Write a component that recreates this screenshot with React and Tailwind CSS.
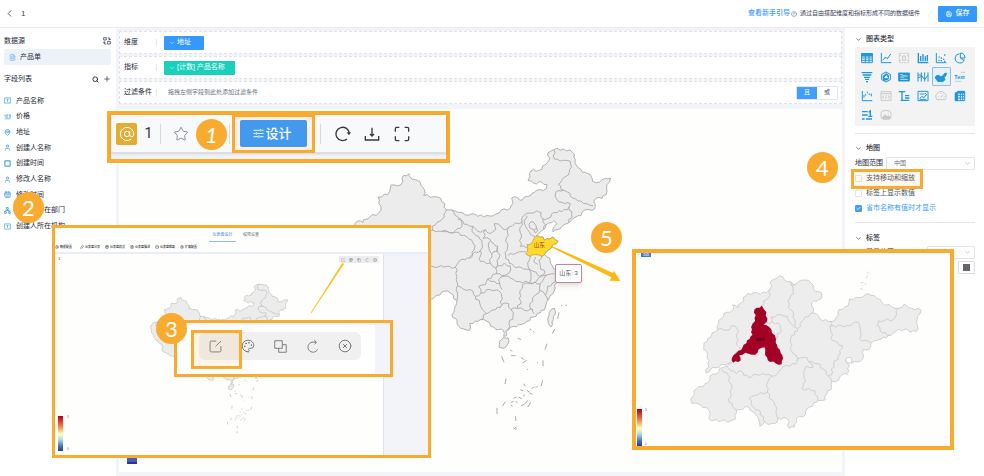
import React from 'react'
import {
  AtSign,
  CalendarDays,
  Check,
  ChevronDown,
  ChevronLeft,
  CircleHelp,
  CircleX,
  Copy,
  FileText,
  Link,
  MapPin,
  Network,
  Palette,
  Plus,
  Save,
  Search,
  Settings,
  Square,
  Star,
  User,
} from 'lucide-react'

// 给地图边界加一点折线细节
const rough = (text, closed, amount = 4) => {
  const pts = text.trim().split(/\s+/).map(p => p.split(',').map(Number))
  const out = []
  pts.forEach(([x, y], i) => {
    out.push(`${x},${y}`)
    const next = pts[i + 1] || (closed ? pts[0] : null)
    if (!next) return
    const [nx, ny] = next
    const len = Math.hypot(nx - x, ny - y) || 1
    const steps = Math.max(1, Math.round(len / 9))
    for (let s = 1; s < steps; s++) {
      const t = s / steps
      const k = Math.sin(x * 1.7 + y * 2.3 + s * 4.1) * Math.min(amount, len / 5)
      const px = x + (nx - x) * t - ((ny - y) / len) * k
      const py = y + (ny - y) * t + ((nx - x) / len) * k
      out.push(`${px.toFixed(1)},${py.toFixed(1)}`)
    }
  })
  return out.join(' ')
}

const chinaOutline = `
-235,293 -220,275 -202,278 -200,270 -155,250 -148,230 -157,202 -128,195 -118,166 -88,165 -85,145 -65,132
-55,148 -30,158 -18,180 -20,198 10,201 32,207 48,240 65,241 95,248 115,257 135,254 160,262 190,258 212,242
240,235 248,222 244,205 262,204 275,212 290,200 312,188 328,180 348,177 350,165 335,158 310,160 293,152
299,140 302,124 325,122 345,105 358,85 352,70 370,60 400,58 426,68 435,90 440,110 456,128 480,135 487,155
508,157 525,146 540,145 530,165 530,185 515,206 498,205 490,215 495,230 485,242 465,240 452,258 430,265
415,280 395,290 380,300 368,307 371,291 380,282 370,273 355,280 345,295 330,306 318,318 338,322 342,332
358,328 368,322 383,335 378,342 365,348 355,360 342,374 358,385 366,408 375,430 378,450 375,475 368,492
355,510 345,532 330,550 310,562 290,575 272,584 250,590 236,600 226,604 229,618 220,620 219,602 205,600
190,592 170,575 150,570 135,575 118,582 118,602 100,598 85,590 80,573 65,555 74,532 80,512 60,490 40,485
20,497 0,508 -25,500 -60,498 -100,472 -141,453 -170,434 -170,406 -217,359 -230,321`

const chinaBorders = [
  '48,240 42,262 20,278 5,290 8,302 -30,312 -90,318 -150,300 -210,290',
  '8,302 35,305 75,308 108,320 128,340 132,360 120,385 95,388 75,412 40,412 5,410 -40,400 -100,390 -130,350',
  '65,241 82,262 95,280 90,296 60,310 35,305',
  '82,268 110,284 128,290 125,306 145,320 155,342 150,362 128,372 118,385',
  '128,290 150,308 165,300 178,312 196,300 192,282 212,290 226,300 236,292 255,280 275,278 280,258 300,250 318,244 332,248 338,268 352,266 372,248 395,246 416,232 420,222',
  '165,300 158,326 180,330 190,342 202,350 200,365 184,372 175,352 178,335',
  '236,292 228,325 232,350 226,378 236,400 250,408',
  '275,278 268,300 272,325 270,350 290,355',
  '232,378 258,370 286,366',
  '290,258 282,280 292,300 308,318 316,324',
  '296,284 308,276 316,286 320,296 310,300 298,294 296,284',
  '310,300 315,310 322,304 320,296',
  '338,268 345,285 340,298',
  '416,232 424,255 415,278',
  '370,60 372,88 400,92 420,95 424,112 414,136 394,152 384,164 400,182 376,188 380,210 402,222 420,222',
  '400,182 418,190 428,205 452,214 470,222 488,228',
  '75,412 80,440 82,470 98,478 120,480 135,500 152,490 145,470 165,465 172,448 198,432 196,415 180,400 150,395 150,362',
  '184,372 180,400',
  '202,350 206,385 196,415 222,400 240,410 236,430 215,438 198,432',
  '80,470 82,500 80,512',
  '135,500 148,520 156,540 168,552 150,570',
  '152,490 180,480 208,486 214,500 214,525 196,540 168,552',
  '172,448 192,455 208,462 205,450 222,440 240,445 268,456 296,460 302,440 298,420 280,418 250,408',
  '208,462 215,480',
  '214,525 235,522 242,540 262,536 282,542 306,538 312,552',
  '242,540 248,560 236,580 232,600',
  '262,536 272,515 268,490 276,466 296,460 330,462 328,482 312,500 300,520 302,538',
  '328,482 345,496 352,512',
  '296,460 318,456 332,440 350,436 372,432',
  '330,462 340,448 350,436',
  '300,380 292,400 298,420 318,428 328,440 344,430 330,410 326,392 335,378',
  '375,456 352,470 345,496',
  '316,382 310,396 322,404',
]

const shandong = '322,318 338,322 342,332 358,328 368,322 383,335 378,342 365,348 355,360 345,368 335,380 315,375 300,380 286,372 292,355 290,345 305,340 310,328'

const seaDashes = 'M386,548l-4,20M373,598l-7,14M350,642l-6,18M338,692v18M337,752l-5,18M301,818l-8,14M214,680l7,18M227,747l-3,16M200,835v18M225,816l-9,14M240,662l6,3M242,678h14M272,684l10,6M277,700l12,-8M262,625l10,5M298,598l6,3M308,605l4,3M320,698l3,2M290,718l3,2M280,762l5,8M270,780l8,3M290,782l8,6M298,790l8,4M304,776l8,-4M316,774l6,-4M278,800l6,-5M264,802l10,5M249,806l10,-4M241,826l6,4M256,815l6,4M272,828l10,-4M284,822l8,-10M242,818l8,-3M255,860l2,14M248,894l10,6M254,892l6,4M405,527h4M392,528h3'

const ChinaMap = ({ className, highlight }) => (
  <svg viewBox="-250 40 810 900" className={className} aria-hidden="true">
    <g fill="#ececec" stroke="#acacac" strokeWidth="2.8" strokeLinejoin="round">
      <polygon points={rough(chinaOutline, true)} />
      <polygon points={rough('207,635 218,624 234,625 236,634 229,648 218,656 206,652', true, 2)} />
      <polygon points={rough('362,540 372,535 375,545 369,570 362,592 354,582 352,566', true, 2)} />
      {chinaBorders.map(line => (
        <polyline key={line} points={rough(line, false)} fill="none" />
      ))}
    </g>
    <path d={seaDashes} stroke="#a5a5a5" strokeWidth="2.8" fill="none" />
    {highlight && (
      <g>
        <polygon points={rough(shandong, true, 3)} fill="#ffd92b" stroke="#b9a24c" strokeWidth="2.4" />
        <text x="327" y="353" textAnchor="middle" fontSize="17" fill="#a53428">山东</text>
      </g>
    )}
  </svg>
)

const provinceOutline = `
448,90 462,103 480,108 490,117 508,106 535,104 548,118 556,138 574,142 572,160 550,166 544,180 548,202 565,212
578,226 612,226 624,208 626,192 654,180 658,160 686,156 712,144 740,158 756,172 785,184 805,188 822,176 845,188
873,194 862,212 862,240 858,258 840,260 826,250 796,258 782,270 760,275 742,284 722,294 716,312 700,312 700,330
692,346 664,354 662,336 650,338 648,352 658,362 650,384 630,392 625,404 604,408 604,425 590,445 584,464 562,466
560,470 530,490 525,508 498,520 492,545 477,549 470,520 442,518 436,534 414,538 404,530 388,543 382,515 370,500
355,485 318,494 316,520 300,527 240,525 234,492 210,478 184,474 180,462 198,430 232,412 238,392 265,378 275,366
290,362 304,352 300,350 240,372 226,382 236,345 220,302 232,278 262,252 264,225 290,200 308,192 306,178 322,186
352,143 408,142 420,128 424,104`

const provinceBorders = [
  '420,128 414,158 400,166 396,180',
  '480,108 488,125 490,145 472,165 474,186 490,205 494,242',
  '262,252 298,252 304,240 320,250 320,300 334,312',
  '400,237 425,228 422,214 452,208 470,212 480,232 500,248 502,256 484,270 480,290 484,318 502,340',
  '425,228 450,240 454,255 440,265 436,282',
  '502,248 520,222 540,204 548,202',
  '600,226 602,260 606,285 636,300 630,325 610,355 604,388 594,392',
  '502,340 496,356 460,362 452,372 442,384 425,392 405,388 370,386 362,396 340,390 332,376 318,384 300,376 288,362',
  '502,340 530,336 536,350 560,354 580,372 594,392 604,408',
  '528,362 520,380 526,408 514,430 554,436 562,466',
  '536,350 548,366 528,362',
  '600,242 650,240 684,230 690,258 688,280 722,292',
  '805,188 790,222 744,226 740,240 758,262 780,268',
  '275,372 292,388 304,430 296,470 318,494',
  '425,392 412,410 410,440 372,450 356,458 370,485 390,500 402,530',
  '410,440 434,480 442,518',
]

const jinan = '394,180 400,190 408,200 410,228 400,237 418,246 424,262 434,270 436,292 448,312 456,330 454,356 436,354 412,344 404,320 402,305 384,312 374,328 345,322 326,330 330,346 308,352 304,338 318,322 336,306 350,284 366,268 362,244 374,226 372,192'

const ProvinceMap = ({ className }) => (
  <svg viewBox="170 70 720 490" className={className} aria-hidden="true">
    <g fill="#ededed" stroke="#c2c2c2" strokeWidth="2.2" strokeLinejoin="round">
      <polygon points={rough(provinceOutline, true)} />
      {provinceBorders.map(line => (
        <polyline key={line} points={rough(line, false)} fill="none" />
      ))}
      <circle cx="656" cy="344" r="9" fill="#fff" />
      <path d="M710,84l6,-6M708,98l4,-8M692,112l8,-2M690,128l8,4M704,116l4,-2M650,386l4,2M480,118h16" />
    </g>
    <polygon points={rough(jinan, true, 3)} fill="#a50026" />
    <text x="389" y="287" textAnchor="middle" fontSize="9" fill="#1c0508">济南市</text>
  </svg>
)

// 图表类型图标
const chartIcons = [
  { name: '表格', art: <><path d="M2 5h32v27H2z" /><path d="M2 12h32M2 18h32M2 25h32M13 5v27M24 5v27" /><path d="M2 5h32v6H2z" fill="currentColor" /></> },
  { name: '折线图', art: <path d="M4 3v29h30M8 25l7-8 8 2 9-13M14 16h2M22 20h2M31 7h2" /> },
  { name: '指标卡', off: true, art: <><path d="M4 4h28v28H4z" strokeDasharray="4 2" /><path d="M14 12h8v13h-8zM4 11h5M27 11h5M4 25h5M27 25h5" /></> },
  { name: '柱状图', art: <path d="M4 3v29h30M11 28V12M18 28V6M25 28V13M31 28V9" strokeWidth="4" /> },
  { name: '散点图', art: <><path d="M4 3v29h30" /><path d="M10 25h4M17 18h4M17 26h4M24 22h4M27 9h4M27 28h4M11 15h3" strokeWidth="4" /></> },
  { name: '饼图', art: <><path d="M16 5a14 14 0 1 0 15 18" /><path d="M19 3v15h14C33 9 27 3 19 3zM19 18l11 7" /></> },
  { name: '漏斗图', art: <path d="M2 5h32M5 12h26M9 19h18M12 25h12M15 32h6" strokeWidth="4" /> },
  { name: '雷达图', art: <><path d="M18 3l13 7v16l-13 7-13-7V10z" /><path d="M18 8l8 5-2 13-13 2-2-12z" fill="currentColor" /><path d="M12 21l8-9 4 10z" fill="#fff" stroke="none" /></> },
  { name: '桑基图', art: <><path d="M2 6h32v24H2z" fill="currentColor" /><path d="M7 11c10 0 10 6 22 4M7 25h22M7 18h12" stroke="#f3f3f3" strokeWidth="2.5" /></> },
  { name: '平行坐标', art: <path d="M3 4v28M13 4v28M23 4v28M33 4v28M3 12h10M3 20l10-3M13 12l10 14 10-14" /> },
  { name: '地图', active: true, art: <path d="M3 15l8-2 6 4 8-3 2-5 7-3-1 8-6 5 3 7-7 6-8-1-6 1-4-6-5-5z" fill="currentColor" /> },
  { name: '词云', art: <><path d="M20 4h13M3 31h19" strokeWidth="2" opacity=".5" /><text x="1" y="24" fontSize="16" fontWeight="700" fill="currentColor" stroke="none">Text</text></> },
  { name: '趋势图', art: <path d="M4 3v29h30M9 23v-8M14 17v-5M19 10V5M25 10v5M31 11v8" /> },
  { name: '代码', off: true, art: <><path d="M3 5h30v26H3zM3 11h30" /><path d="M12 17l-5 4 5 4M24 17l5 4-5 4M19 16l-2 10" /></> },
  { name: '文本', art: <path d="M2 5h20M12 5v26M8 31h26M21 17h13M21 24h13" strokeWidth="4" /> },
  { name: '图片', art: <><path d="M3 4h30v28H3z" /><path d="M8 26l7-7 6 4 7-9M8 12h15M8 28h20M24 9l5 5-5 4" /></> },
  { name: '仪表盘', off: true, art: <path d="M6 29a15 15 0 1 1 24 0zM17 23l7-9M8 20h3M18 9v3M26 20h3" /> },
  { name: '透视表', art: <><path d="M4 8h28v24H4zM4 16h28M4 24h28M11 4v28M19 4v28M26 4v28" /><path d="M4 10h6v22H4zM11 4h21v5H11z" fill="currentColor" /></> },
  { name: '排行', art: <path d="M3 8h17M3 18h17M3 30h8M15 30h18M23 10l5-4v16M22 22h12" strokeWidth="4" /> },
  { name: '图库', off: true, art: <><rect x="3" y="5" width="30" height="26" rx="9" /><path d="M7 26l8-9 6 7 4-4 5 5v3H8z" fill="currentColor" /><path d="M25 12v2" strokeWidth="4" /></> },
]

const ChartIcon = ({ art, off }) => (
  <svg
    viewBox="0 0 36 36"
    className={`w-3 h-3 ${off ? 'text-[#c8c8c8]' : 'text-[#1f96dc]'}`}
    fill="none"
    stroke="currentColor"
    strokeWidth="3"
    aria-hidden="true"
  >
    {art}
  </svg>
)

const TextIcon = () => (
  <svg viewBox="0 0 24 24" className="w-[7px] h-[7px]" fill="none" stroke="currentColor" strokeWidth="2.5" aria-hidden="true">
    <path d="M2 3h20v18H2zM8 8h8M12 8v9" />
  </svg>
)

const NumberIcon = () => (
  <svg viewBox="0 0 24 24" className="w-[7px] h-[7px]" fill="none" stroke="currentColor" strokeWidth="2.5" aria-hidden="true">
    <path d="M2 7l2-1v9M8 6h5v4H8v5h5M17 6h5v9h-5M18 10h4M2 20h20" />
  </svg>
)

const fields = [
  { label: '产品名称', icon: <TextIcon /> },
  { label: '价格', icon: <NumberIcon /> },
  { label: '地址', icon: <MapPin size={7} strokeWidth={3} /> },
  { label: '创建人名称', icon: <User size={7} strokeWidth={3} /> },
  { label: '创建时间', icon: <Square size={7} strokeWidth={4} /> },
  { label: '修改人名称', icon: <User size={7} strokeWidth={3} /> },
  { label: '修改时间', icon: <CalendarDays size={7} strokeWidth={3} /> },
  { label: '创建人所在部门', icon: <Network size={7} strokeWidth={3} /> },
  { label: '创建人所在机构', icon: <TextIcon /> },
]

const Header = () => (
  <header className="flex items-center h-7 pl-1 pr-[7px] bg-white border-b border-[#e9ebf0]">
    <button type="button" aria-label="返回" className="text-gray-600">
      <ChevronLeft size={11} strokeWidth={2} />
    </button>
    <span className="ml-1.5 text-[8px] text-gray-700">1</span>
    <div className="flex items-center gap-px ml-auto">
      <a href="#guide" className="text-[7px] font-medium text-[#3b99ff]">查看新手引导</a>
      <CircleHelp size={6} className="text-gray-500" />
      <span className="w-[128px] pl-0.5 text-[6px] text-gray-700">通过自由搭配维度和指标形成不同的数据组件</span>
    </div>
    <button type="button" className="flex items-center justify-center gap-1 w-[39px] h-4 ml-3 rounded-[1px] bg-[#3399ff] text-[7px] font-medium text-white">
      <Save size={6} strokeWidth={3} />
      保存
    </button>
  </header>
)

const Sidebar = () => (
  <aside className="w-[116px] shrink-0 px-1 pt-[7px] bg-white text-[7px] text-gray-800">
    <div className="flex items-center justify-between h-3 pr-px">
      <h2>数据源</h2>
      <button type="button" aria-label="切换数据源">
        <svg viewBox="0 0 24 24" className="w-2 h-2" fill="none" stroke="currentColor" strokeWidth="2" aria-hidden="true">
          <path d="M2 2h8v7H2zM14 13h8v8h-8zM14 3h6v6M17 6l3 3 3-3M10 21H4v-7M1 17l3-3 3 3" />
        </svg>
      </button>
    </div>
    <button type="button" className="flex items-center gap-1 w-[107px] h-4 mt-0.5 pl-[5px] rounded-xs bg-[#edf2fa]">
      <FileText size={7} className="text-[#5aa7f5]" />
      产品单
    </button>
    <div className="flex items-center h-3 mt-2 pr-px">
      <h2>字段列表</h2>
      <button type="button" aria-label="搜索" className="ml-auto"><Search size={7} strokeWidth={3} /></button>
      <button type="button" aria-label="添加" className="ml-1"><Plus size={8} strokeWidth={2} /></button>
    </div>
    <ul className="grid grid-rows-9 h-[141px] mt-2">
      {fields.map(f => (
        <li key={f.label} className="flex items-center gap-1 whitespace-nowrap">
          <span className="w-2 text-[#4aa8e0]">{f.icon}</span>
          {f.label}
        </li>
      ))}
    </ul>
  </aside>
)

const ShelfRow = ({ label, children }) => (
  <div className="flex items-center h-[23px] pl-1 pr-[3px] border border-dashed border-[#dfe2e8] bg-white">
    <span className="w-8 text-[7px] text-gray-800 whitespace-nowrap">{label}</span>
    <span className="w-px h-[7px] mr-[7px] bg-[#e3e5ea]" />
    {children}
  </div>
)

const Workspace = () => (
  <main className="flex flex-col flex-1 min-w-0 px-[3px] pt-[3px] pb-1">
    <div className="flex flex-col gap-0.5">
      <ShelfRow label="维度">
        <button type="button" className="flex items-center gap-0.5 w-10 h-3.5 pl-[5px] rounded-[1px] bg-[#3399ff] text-[7px] text-white">
          <ChevronDown size={6} />
          地址
        </button>
      </ShelfRow>
      <ShelfRow label="指标">
        <button type="button" className="flex items-center gap-0.5 w-[71px] h-3.5 pl-[5px] rounded-[1px] bg-[#1bd0ba] text-[7px] text-white">
          <ChevronDown size={6} />
          [计数] 产品名称
        </button>
      </ShelfRow>
      <ShelfRow label="过滤条件">
        <span className="pl-1 text-[6px] text-gray-500">拖拽左侧字段到此处添加过滤条件</span>
        <div className="flex ml-auto rounded-[1px] border border-[#e3e5ea] text-[6px]">
          <button type="button" className="w-5 h-3 bg-[#409eff] text-white">且</button>
          <button type="button" className="w-5 h-3 text-gray-600">或</button>
        </div>
      </ShelfRow>
    </div>
    <section className="flex justify-center flex-1 mt-[5px] pt-[34px] pl-0.5 bg-[#fefefd]">
      <ChinaMap className="w-[270px] h-[300px]" highlight />
    </section>
  </main>
)

const SectionTitle = ({ children }) => (
  <h2 className="flex items-center gap-1 h-3 text-[7px] font-medium text-gray-800">
    <ChevronDown size={7} />
    {children}
  </h2>
)

const CheckRow = ({ label, checked }) => (
  <label className={`flex items-center gap-1 h-[15px] text-[7px] ${checked ? 'text-[#409eff]' : 'text-gray-600'}`}>
    <span className="relative flex items-center justify-center w-[7px] h-[7px]">
      <input
        type="checkbox"
        defaultChecked={checked}
        className="w-full h-full appearance-none rounded-[1px] border border-[#e3e5ea] bg-white checked:border-[#409eff] checked:bg-[#409eff]"
      />
      {checked && <Check size={5} strokeWidth={4} className="absolute text-white pointer-events-none" />}
    </span>
    {label}
  </label>
)

const SettingsPanel = () => (
  <aside className="w-[139px] shrink-0 pl-[10px] pr-[9px] pt-[5px] bg-white">
    <SectionTitle>图表类型</SectionTitle>
    <div className="grid grid-cols-6 mt-0.5 pl-[3px] pr-[6px] pt-px pb-0.5 bg-[#f3f3f3]">
      {chartIcons.map(icon => (
        <button
          key={icon.name}
          type="button"
          aria-label={icon.name}
          className={`flex items-center justify-center h-[19px] ${icon.active ? 'rounded-[1px] border border-[#8cbcf0] bg-[#e6f1fd]' : ''}`}
        >
          <ChartIcon art={icon.art} off={icon.off} />
        </button>
      ))}
    </div>
    <hr className="mt-[7px] mb-2 border-[#e6e6e6]" />
    <SectionTitle>地图</SectionTitle>
    <div className="flex items-center h-[15px] mt-0.5">
      <label htmlFor="range" className="w-[31px] text-[7px] text-gray-800 whitespace-nowrap">地图范围</label>
      <div className="relative flex-1">
        <select id="range" className="block w-full h-[13px] pl-[7px] appearance-none rounded-[1px] border border-[#e3e5ea] text-[6px] text-gray-500">
          <option>中国</option>
        </select>
        <ChevronDown size={7} className="absolute right-1 top-[3px] text-gray-400 pointer-events-none" />
      </div>
    </div>
    <CheckRow label="支持移动和缩放" />
    <CheckRow label="标签上显示数值" />
    <CheckRow label="省市名称有值时才显示" checked />
    <hr className="mt-1.5 mb-[9px] border-[#e6e6e6]" />
    <SectionTitle>标签</SectionTitle>
    <div className="flex items-center justify-between mt-0.5">
      <label htmlFor="place" className="pl-[11px] text-[7px] text-gray-600">显示位置</label>
      <div className="relative w-12">
        <select id="place" className="block w-full h-[13px] appearance-none rounded-[1px] border border-[#e3e5ea]" />
        <ChevronDown size={7} className="absolute right-1 top-[3px] text-gray-400 pointer-events-none" />
      </div>
    </div>
    <div className="flex justify-end mt-0.5">
      <button type="button" aria-label="文字颜色" className="flex items-center justify-center w-[17px] h-[13px] rounded-[1px] border border-[#d9dce2]">
        <span className="w-[7px] h-[7px] bg-[#666]" />
      </button>
    </div>
  </aside>
)

const Marker = ({ n, className }) => (
  <span className={`absolute flex items-center justify-center w-[31px] h-[31px] rounded-full bg-[#f9ab2f] font-[Lato] text-[22px] leading-none text-white ${className}`}>
    {n}
  </span>
)

const ColorScale = ({ className }) => (
  <div className={`w-[5px] bg-[linear-gradient(#a50026,#d73027_12%,#f46d43_26%,#fdae61_38%,#ffffbf_52%,#abd9e9_68%,#4575b4_86%,#313695)] ${className}`} />
)

const DesignCallout = () => (
  <section className="absolute left-[107px] top-[111px] w-[343px] h-[52px] border-4 border-[#f9ab2f] bg-[#f1f3f6]">
    <div className="flex items-center h-[38px] pl-[5px] bg-[#f8f9fb] border-b border-[#dcdfe7] shadow-sm text-[#3a3a3a]">
      <span className="flex items-center justify-center w-[21px] h-[22px] rounded-xs bg-[#e3ac33] text-white">
        <AtSign size={16} strokeWidth={1.5} />
      </span>
      <span className="w-[23px] text-center font-[Roboto] text-[15px]">1</span>
      <span className="w-px h-5 bg-[#d5d7db]" />
      <button type="button" aria-label="收藏" className="ml-3 text-[#858b99]"><Star size={16} strokeWidth={1.5} /></button>
      <span className="w-px h-5 ml-10 bg-[#d5d7db]" />
      <div className="flex items-center justify-center w-[83px] h-[39px] ml-0.5 border-3 border-[#f9ab2f] bg-[#fdf1e6]">
        <button type="button" className="flex items-center justify-center gap-px w-[67px] h-[27px] pr-0.5 rounded-xs bg-[#4299ee] text-[13px] font-medium text-white">
          <svg viewBox="0 0 24 24" className="w-[11px] h-[11px]" fill="none" stroke="currentColor" strokeWidth="2" aria-hidden="true">
            <path d="M1 5h14M19 5h4M17 2v6M1 12h4M9 12h14M7 9v6M1 19h10M15 19h8M13 16v6" />
          </svg>
          设计
        </button>
      </div>
      <span className="w-px h-5 ml-[5px] bg-[#d5d7db]" />
      <button type="button" aria-label="刷新" className="ml-3.5">
        <svg viewBox="0 0 48 48" className="w-4 h-4" fill="none" stroke="currentColor" strokeWidth="4" aria-hidden="true">
          <path d="M36 39A20 20 0 1 1 43 22" />
          <path d="M35 19h13l-6 9z" fill="currentColor" stroke="none" />
        </svg>
      </button>
      <button type="button" aria-label="下载" className="ml-[13px]">
        <svg viewBox="0 0 48 48" className="w-4 h-4" fill="none" stroke="currentColor" strokeWidth="4" aria-hidden="true">
          <path d="M4 30v12h40V30M24 5v24M18 24l6 6 6-6" />
        </svg>
      </button>
      <button type="button" aria-label="全屏" className="ml-3.5">
        <svg viewBox="0 0 48 48" className="w-4 h-4" fill="none" stroke="currentColor" strokeWidth="4" aria-hidden="true">
          <path d="M4 17V8q0-4 4-4h8M32 4h8q4 0 4 4v9M44 31v9q0 4-4 4h-8M16 44H8q-4 0-4-4v-9" />
        </svg>
      </button>
    </div>
  </section>
)

const boardTools = [
  { label: '数据配置', Icon: Settings },
  { label: '仪表盘分享', Icon: Link },
  { label: '仪表盘样式', Icon: Palette },
  { label: '仪表盘描述', Icon: FileText },
  { label: '仪表盘帮助', Icon: CircleHelp },
  { label: '扩展配置', Icon: Settings },
]

const EditIcon = ({ className }) => (
  <svg viewBox="0 0 36 36" className={className} fill="none" stroke="currentColor" strokeWidth="2.6" aria-hidden="true">
    <path d="M20 3H6Q3 3 3 6v24q0 3 3 3h24q3 0 3-3V17M18 18L33 3" />
  </svg>
)

const RedoIcon = ({ className }) => (
  <svg viewBox="0 0 36 36" className={className} fill="none" stroke="currentColor" strokeWidth="2.6" aria-hidden="true">
    <path d="M28 6H17a14 14 0 1 0 15 20M23 1l6 5-5 6" />
  </svg>
)

const BoardCallout = () => (
  <section className="absolute left-[52px] top-[225px] flex flex-col w-[379px] h-[233px] border-3 border-[#f9ab2f] bg-[#fefefd] overflow-hidden">
    <nav className="flex justify-center gap-1 h-3.5 pt-[3px] pr-3 text-[4px] leading-[8px]">
      <a href="#design" className="w-[27px] h-[11px] text-center border-b border-[#8ebcf0] text-[#3b86e8]">仪表盘设计</a>
      <a href="#auth" className="w-[22px] text-center text-gray-500">权限设置</a>
    </nav>
    <div className="flex items-center h-[10px] text-[3px] font-medium text-gray-800">
      {boardTools.map(({ label, Icon }) => (
        <button key={label} type="button" className="flex items-center gap-px w-[25px] whitespace-nowrap">
          <Icon size={4} />
          {label}
        </button>
      ))}
    </div>
    <div className="h-0.5 bg-[#e9edf6]" />
    <div className="flex flex-1">
      <div className="flex flex-col flex-1 pl-[3px] pb-1 border-r border-[#dfe3ea]">
        <div className="flex items-start justify-between pt-0.5 pr-1">
          <span className="text-[4px] text-gray-600">1</span>
          <div className="flex items-center justify-around w-10 h-[7px] rounded-[1px] bg-[#ececec] text-gray-500">
            <EditIcon className="w-1 h-1" />
            <Palette size={4} />
            <Copy size={4} />
            <RedoIcon className="w-1 h-1" />
            <CircleX size={4} />
          </div>
        </div>
        <div className="flex items-end flex-1">
          <ColorScale className="h-[35px]" />
          <div className="flex flex-col justify-between h-[36px] pl-1 text-[3px] text-gray-500">
            <span>3</span>
            <span>0</span>
          </div>
          <ChinaMap className="w-[143px] h-[159px] mb-[11px] ml-[79px]" />
        </div>
      </div>
      <div className="w-11 bg-[#f2f4f9]" />
    </div>
  </section>
)

const EditCallout = () => (
  <section className="absolute left-[174px] top-[320px] flex w-[219px] h-[57px] border-3 border-[#f9ab2f] bg-[#f2f4f9]">
    <div className="flex-1 pt-[7px] pl-[22px] border-t-2 border-[#f2f4f9] bg-white">
      <div className="flex items-center h-7 w-[162px] rounded-md bg-[#f0f0f0] text-[#777]">
        <button type="button" aria-label="编辑" className="flex flex-1 justify-center"><EditIcon className="w-[13px] h-[13px]" /></button>
        <button type="button" aria-label="主题" className="flex flex-1 justify-center"><Palette size={14} strokeWidth={1.7} /></button>
        <button type="button" aria-label="复制" className="flex flex-1 justify-center">
          <svg viewBox="0 0 36 36" className="w-[13px] h-[13px]" fill="none" stroke="currentColor" strokeWidth="2.6" aria-hidden="true">
            <path d="M2 2h21v21H2zM23 13h11v21H13V23" />
          </svg>
        </button>
        <button type="button" aria-label="重做" className="flex flex-1 justify-center"><RedoIcon className="w-[13px] h-[13px]" /></button>
        <button type="button" aria-label="关闭" className="flex flex-1 justify-center"><CircleX size={14} strokeWidth={1.7} /></button>
      </div>
    </div>
    <div className="w-[15px]" />
  </section>
)

const ProvinceCallout = () => (
  <section className="absolute left-[632px] top-[249px] flex flex-col w-[322px] h-[201px] border-4 border-[#f9ab2f] bg-[#fefefd]">
    <nav className="flex items-center h-1 gap-px pl-px text-[3px] leading-[4px] text-gray-500">
      <ChevronLeft size={3} />
      <a href="#country" className="w-[10px] bg-[#3f78d4] text-center text-white">返回</a>
    </nav>
    <div className="flex items-end flex-1 pl-px">
      <ColorScale className="h-[37px]" />
      <div className="flex flex-col justify-between h-[38px] pl-[3px] text-[3px] text-gray-500">
        <span>3</span>
        <span>0</span>
      </div>
      <ProvinceMap className="w-[240px] h-[163px] ml-10 mb-[14px]" />
    </div>
  </section>
)

const App = () => (
  <div className="relative flex flex-col min-h-screen overflow-hidden bg-[#f3f4f9] font-['Liberation_Sans','Noto_Sans_CJK_SC',sans-serif]">
    <Header />
    <div className="flex flex-1">
      <Sidebar />
      <Workspace />
      <SettingsPanel />
    </div>

    {/* 地图提示 */}
    <div className="absolute left-[555px] top-[264px] flex items-center justify-center w-[27px] h-[19px] rounded-xs border border-[#c0879b] bg-white shadow-md text-[6px] text-gray-600">
      山东: 3
    </div>
    <div className="absolute left-[127px] top-[455px] w-[10px] h-[9px] border-b-2 border-[#30309a] bg-[#4560ae]" />

    {/* 操作步骤标注 */}
    <DesignCallout />
    <BoardCallout />
    <svg viewBox="0 0 102 156" className="absolute left-[310px] top-[262px] w-[34px] h-[52px]" aria-hidden="true">
      <path d="M97 2l5 4L4 154l-2-2z" fill="#fbc02d" />
    </svg>
    <EditCallout />
    <div className="absolute left-[191px] top-[330px] w-[51px] h-[39px] border-3 border-[#f9ab2f] bg-[#f9ab2f]/10" />
    <ProvinceCallout />
    <svg viewBox="0 0 210 111" className="absolute left-[551px] top-[245px] w-[70px] h-[37px]" aria-hidden="true">
      <path d="M1 2L186 84l3-7 19 31-32-1 5-10L0 6z" fill="#fdb913" />
    </svg>
    <div className="absolute left-[851px] top-[169px] w-[72px] h-5 border-3 border-[#f9ab2f] bg-[#f9ab2f]/8 pointer-events-none" />
    <Marker n="1" className="left-[196px] top-[119px] italic" />
    <Marker n="2" className="left-[13px] top-[192px]" />
    <Marker n="3" className="left-[156px] top-[313px]" />
    <Marker n="4" className="left-[807px] top-[152px]" />
    <Marker n="5" className="left-[591px] top-[222px]" />
  </div>
)

export default App
